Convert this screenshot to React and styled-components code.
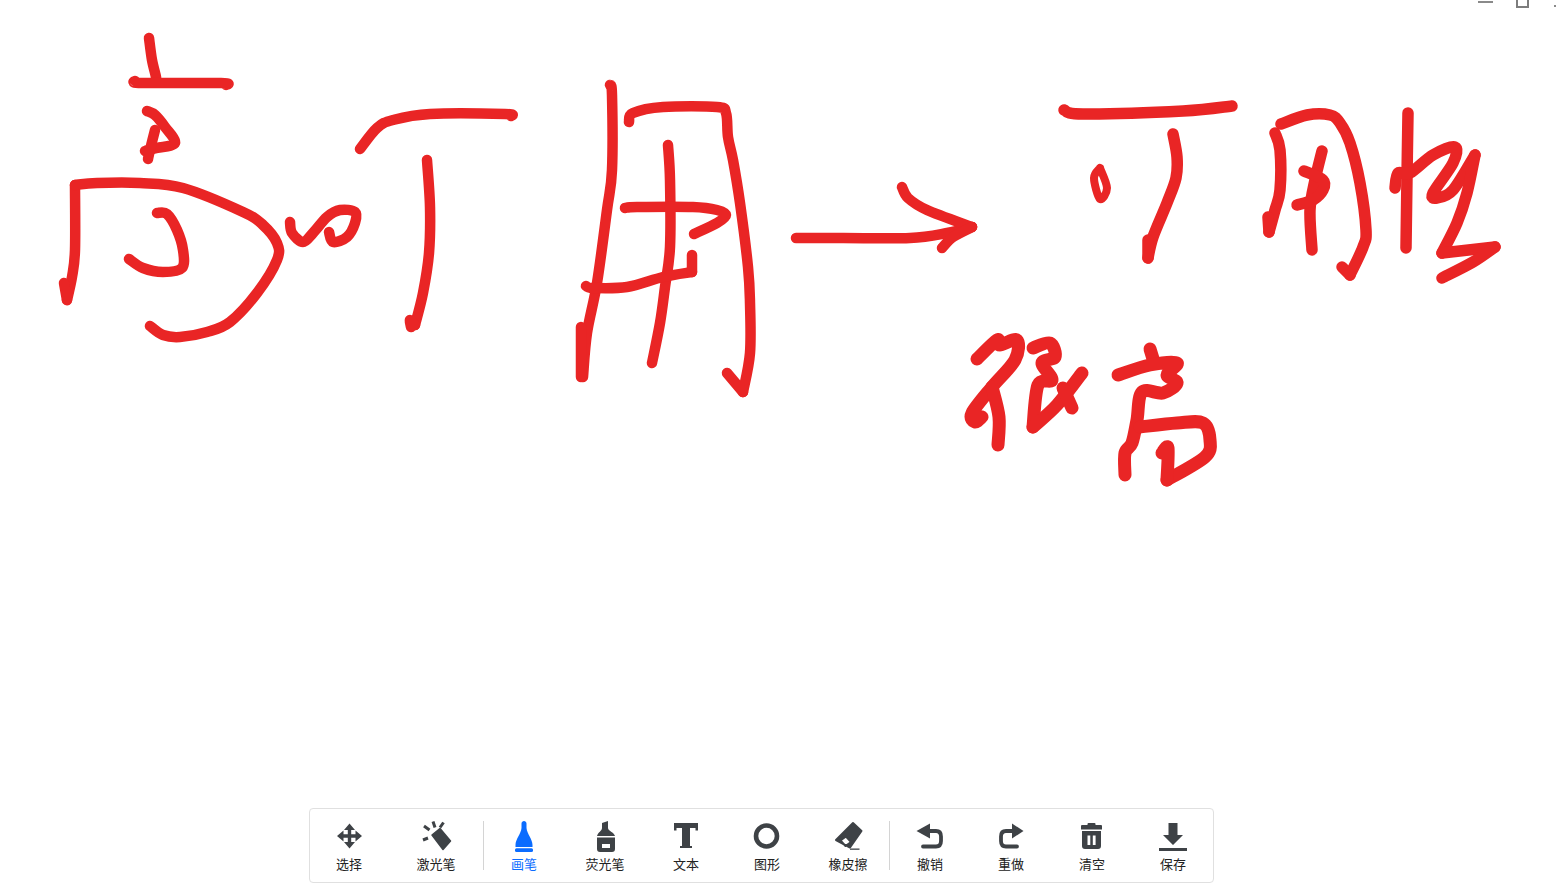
import styled, { createGlobalStyle } from "styled-components";

const GlobalStyle = createGlobalStyle`
  html, body {
    margin: 0;
    padding: 0;
    background: #fff;
  }
`;

const Page = styled.div`
  position: relative;
  width: 100%;
  height: 100vh;
  overflow: hidden;
  background: #fff;
`;

const Canvas = styled.svg`
  position: absolute;
  inset: 0;
  width: 100%;
  height: 100%;
`;

const WindowControls = styled.div`
  position: absolute;
  top: 0;
  left: 1478px;
  display: flex;
  align-items: flex-start;
`;

const Minimize = styled.div`
  width: 15px;
  height: 2px;
  margin: 1px 23px 0 0;
  background: #8a8a8a;
`;

const Maximize = styled.div`
  box-sizing: border-box;
  width: 13px;
  height: 8px;
  margin-right: 25px;
  border: 2px solid #7d7d7d;
  border-top: none;
`;

const CloseEdge = styled.div`
  width: 2px;
  height: 2px;
  margin-top: 5px;
  background: #8a8a8a;
`;

const Toolbar = styled.div`
  position: absolute;
  left: 309px;
  bottom: 8px;
  box-sizing: border-box;
  display: flex;
  width: 905px;
  height: 75px;
  background: #fff;
  border: 1px solid #e0e0e0;
  border-radius: 4px;
`;

const Group = styled.div`
  display: flex;
  gap: ${(props) => props.$gap || 0}px;
  margin-left: ${(props) => props.$shift || 0}px;
  padding-right: ${(props) => props.$pad || 0}px;
`;

const Tool = styled.div`
  display: flex;
  flex-direction: column;
  align-items: center;
  box-sizing: border-box;
  width: ${(props) => props.$width || 81}px;
  padding-top: 11px;
  color: ${(props) => (props.$active ? "#0b6cff" : "#3e4246")};
`;

const Icon = styled.svg`
  display: block;
  width: 32px;
  height: 32px;
  fill: currentColor;
`;

const Label = styled.span`
  margin-top: 3px;
  font-family: "Noto Sans CJK SC", "Noto Sans", sans-serif;
  font-size: 13px;
  line-height: 18px;
  white-space: nowrap;
  color: ${(props) => (props.$active ? "#0b6cff" : "#222")};
`;

const Divider = styled.div`
  flex: none;
  align-self: center;
  width: 1px;
  height: 49px;
  background: #d4d4d4;
`;

const SelectIcon = () => (
  <Icon viewBox="0 0 32 32">
    <path d="M16.5 3.500L22 10H18.200V14.300H22.500V10.500L29 16L22.500 21.500V17.700H18.200V22H22L16.5 28.500L11 22H14.800V17.700H10.500V21.500L4 16L10.500 10.500V14.300H14.800V10H11Z" />
  </Icon>
);

const LaserIcon = () => (
  <Icon viewBox="0 0 32 32">
    <path d="M12 15L20 8.500L30.500 21L23 29.500Z" strokeLinejoin="round" stroke="currentColor" strokeWidth="1.5" />
    <path d="M13 1.500L15 7.500M4 6L9.500 10M3 20L8 18M23.500 2.500L20 7.500" stroke="currentColor" strokeWidth="3" fill="none" />
  </Icon>
);

const PenIcon = () => (
  <Icon viewBox="0 0 32 32">
    <path d="M13.500 3.500C13.500 0 18.500 0 18.500 3.500V8C19 14 24.500 19 24.500 25V27H7.500V25C7.500 19 13 14 13.500 8Z" />
    <rect x="7" y="28.300" width="18" height="3.700" rx="1.500" />
  </Icon>
);

const HighlighterIcon = () => (
  <Icon viewBox="0 0 32 32">
    <path d="M13 3L19 1V8C19 11 25 12 26 16H8C9 12 13 11 13 8Z" />
    <path
      fillRule="evenodd"
      d="M8 17.500H26V29C26 31 25 32 23 32H11C9 32 8 31 8 29ZM13 24V28H21V24Z"
    />
  </Icon>
);

const TextIcon = () => (
  <Icon viewBox="0 0 32 32">
    <path d="M4 3H28V10.500H25.500V8H20V26H22V28H10V26H12V8H6.500V10.500H4Z" />
  </Icon>
);

const ShapeIcon = () => (
  <Icon viewBox="0 0 32 32">
    <circle cx="15.500" cy="16" r="10.500" fill="none" stroke="currentColor" strokeWidth="4.600" />
  </Icon>
);

const EraserIcon = () => (
  <Icon viewBox="0 0 32 32">
    <path
      fillRule="evenodd"
      strokeLinejoin="round"
      stroke="currentColor"
      strokeWidth="2"
      d="M21 3L29.500 11L18 27.500L4 20ZM8.500 20.500L14 16.500L19 22L13.500 26Z"
    />
    <rect x="18" y="28.500" width="9.500" height="1.300" />
  </Icon>
);

const UndoIcon = () => (
  <Icon viewBox="0 0 32 32">
    <path d="M2.500 11L16 3.500V18.500Z" />
    <path d="M14 11H22Q27 11 27 16.500V21Q27 26.500 22 26.500H9" fill="none" stroke="currentColor" strokeWidth="3.800" strokeLinecap="round" />
  </Icon>
);

const RedoIcon = () => (
  <Icon viewBox="0 0 32 32">
    <path d="M28.500 11L17 3.500V18.500Z" />
    <path d="M19 11H11Q6 11 6 16.500V21Q6 26.500 11 26.500H22" fill="none" stroke="currentColor" strokeWidth="3.800" strokeLinecap="round" />
  </Icon>
);

const TrashIcon = () => (
  <Icon viewBox="0 0 32 32">
    <path d="M5 6Q5 5 6 5H11.500V4Q11.500 3 12.500 3H18.500Q19.500 3 19.500 4V5H25Q26 5 26 6V9.500H5Z" />
    <path
      fillRule="evenodd"
      d="M6 11H25V26Q25 29 22 29H9Q6 29 6 26ZM11.500 15.500V25H14.300V15.500ZM16.800 15.500V25H19.600V15.500Z"
    />
  </Icon>
);

const SaveIcon = () => (
  <Icon viewBox="0 0 32 32">
    <path d="M11.500 3H20.500V15H26L16 25L6 15H11.500Z" />
    <rect x="2" y="28" width="28" height="3" />
  </Icon>
);

const TOOLS_FIRST = [
  { id: "select", label: "选择", icon: SelectIcon, width: 78 },
  { id: "laser", label: "激光笔", icon: LaserIcon },
];

const TOOLS_DRAW = [
  { id: "pen", label: "画笔", icon: PenIcon, active: true },
  { id: "highlighter", label: "荧光笔", icon: HighlighterIcon },
  { id: "text", label: "文本", icon: TextIcon },
  { id: "shape", label: "图形", icon: ShapeIcon },
  { id: "eraser", label: "橡皮擦", icon: EraserIcon },
];

const TOOLS_LAST = [
  { id: "undo", label: "撤销", icon: UndoIcon },
  { id: "redo", label: "重做", icon: RedoIcon },
  { id: "clear", label: "清空", icon: TrashIcon },
  { id: "save", label: "保存", icon: SaveIcon },
];

// hand-drawn strokes in page coordinates, grouped by pen width
const INK = [
  {
    width: 10.5,
    strokes: [
      // 高
      [[149, 38], [152, 60], [156, 77], [156, 82]],
      [[135, 81], [142, 83], [221, 83], [226, 85]],
      [[147, 111], [155, 115], [165, 127], [175, 143], [157, 148], [145, 151]],
      [[148, 159], [150, 150], [155, 130]],
      [[75, 185], [75, 250], [72, 277], [67, 300]],
      [[67, 300], [64, 283]],
      [[75, 185], [97, 183], [140, 183], [183, 188], [243, 212], [263, 225], [277, 243], [277, 260], [257, 293], [230, 322], [207, 332], [180, 337], [163, 335], [150, 326]],
      [[157, 213], [167, 214], [177, 230], [183, 250], [182, 268], [163, 272], [143, 268], [129, 259]],
      [[290, 222], [292, 233], [303, 242], [313, 233], [327, 217], [340, 210], [355, 212], [355, 223], [347, 237], [333, 242], [329, 232]],
      // 可
      [[360, 149], [377, 128], [393, 120], [430, 114], [505, 114], [511, 116]],
      [[427, 160], [430, 207], [429, 253], [423, 293], [415, 325]],
      [[415, 325], [410, 320], [411, 327]],
      // 用
      [[610, 85], [612, 95], [612, 170], [607, 210], [597, 283], [587, 333], [583, 377]],
      [[581, 327], [581, 377]],
      [[629, 122], [633, 113], [663, 107], [717, 107], [726, 113], [728, 137], [733, 160], [740, 203], [748, 267], [750, 303], [750, 353], [743, 392]],
      [[743, 392], [727, 373]],
      [[668, 145], [670, 180], [670, 247], [665, 287], [660, 323], [652, 363]],
      [[625, 208], [637, 207], [693, 207], [717, 210], [726, 215], [717, 223], [694, 234]],
      [[586, 286], [593, 288], [627, 287], [663, 277], [692, 272]],
      [[692, 272], [692, 255]],
      // arrow
      [[796, 238], [843, 238], [910, 238], [947, 233], [972, 227]],
      [[902, 187], [908, 198], [927, 210], [972, 227]],
      [[972, 227], [953, 237], [942, 248]],
    ],
  },
  {
    width: 8,
    strokes: [
      // dot of 可, nearly closed ring
      [[1100, 168], [1094, 178], [1100, 199], [1107, 188], [1100, 168]],
    ],
  },
  {
    width: 11.5,
    strokes: [
      // 可用性
      [[1064, 110], [1083, 114], [1183, 111], [1232, 106]],
      [[1173, 134], [1177, 157], [1176, 178], [1167, 203], [1153, 237], [1148, 258]],
      [[1148, 258], [1148, 240]],
      [[1275, 133], [1280, 150], [1280, 190], [1275, 210], [1269, 232]],
      [[1269, 232], [1268, 217]],
      [[1281, 124], [1307, 115], [1330, 115], [1340, 123], [1350, 143], [1360, 183], [1366, 230], [1363, 247], [1350, 275]],
      [[1350, 275], [1342, 267]],
      [[1322, 151], [1315, 180], [1310, 210], [1312, 250]],
      [[1304, 171], [1323, 180], [1323, 190], [1313, 200], [1297, 205]],
      [[1408, 113], [1407, 177], [1406, 248]],
      [[1395, 188], [1398, 173], [1410, 173], [1433, 155], [1455, 147], [1453, 163], [1433, 193], [1437, 198], [1453, 190], [1475, 155]],
      [[1475, 155], [1467, 193], [1457, 223], [1442, 253]],
      [[1442, 253], [1495, 247]],
      [[1495, 247], [1473, 262], [1442, 278]],
    ],
  },
  {
    width: 13,
    strokes: [
      // 很
      [[977, 359], [997, 340], [1000, 345], [1017, 340], [1015, 360], [992, 387], [972, 413], [975, 422], [982, 417]],
      [[992, 387], [999, 417], [998, 445]],
      [[1033, 348], [1050, 343], [1055, 357], [1042, 363], [1052, 380], [1038, 385], [1033, 427]],
      [[1033, 427], [1057, 405], [1082, 373]],
      [[1063, 388], [1072, 408]],
      // 高
      [[1150, 349], [1154, 362]],
      [[1118, 375], [1150, 365], [1177, 363], [1167, 375], [1177, 383], [1163, 393], [1142, 392], [1137, 420], [1132, 443], [1125, 453], [1125, 475]],
      [[1140, 427], [1177, 423], [1203, 423], [1210, 440], [1205, 457], [1167, 480]],
      [[1167, 480], [1168, 448], [1162, 453]],
    ],
  },
];

function toPath(points) {
  let d = `M${points[0][0]} ${points[0][1]}`;
  for (let i = 0; i < points.length - 1; i++) {
    const p0 = points[i - 1] || points[i];
    const p1 = points[i];
    const p2 = points[i + 1];
    const p3 = points[i + 2] || p2;
    const c1x = p1[0] + (p2[0] - p0[0]) / 6;
    const c1y = p1[1] + (p2[1] - p0[1]) / 6;
    const c2x = p2[0] - (p3[0] - p1[0]) / 6;
    const c2y = p2[1] - (p3[1] - p1[1]) / 6;
    d += `C${c1x} ${c1y} ${c2x} ${c2y} ${p2[0]} ${p2[1]}`;
  }
  return d;
}

function ToolButton({ tool }) {
  const Glyph = tool.icon;
  return (
    <Tool $width={tool.width} $active={tool.active}>
      <Glyph />
      <Label $active={tool.active}>{tool.label}</Label>
    </Tool>
  );
}

export default function App() {
  return (
    <Page>
      <GlobalStyle />
      <Canvas viewBox="0 0 1556 891">
        {INK.map((pen) =>
          pen.strokes.map((points, index) => (
            <path
              key={`${pen.width}-${index}`}
              d={toPath(points)}
              fill="none"
              stroke="#e92525"
              strokeWidth={pen.width}
              strokeLinecap="round"
              strokeLinejoin="round"
            />
          ))
        )}
      </Canvas>
      <WindowControls>
        <Minimize />
        <Maximize />
        <CloseEdge />
      </WindowControls>
      <Toolbar>
        <Group $gap={7.5} $pad={6.5}>
          {TOOLS_FIRST.map((tool) => (
            <ToolButton key={tool.id} tool={tool} />
          ))}
        </Group>
        <Divider />
        <Group $shift={-0.5}>
          {TOOLS_DRAW.map((tool) => (
            <ToolButton key={tool.id} tool={tool} />
          ))}
        </Group>
        <Divider />
        <Group>
          {TOOLS_LAST.map((tool) => (
            <ToolButton key={tool.id} tool={tool} />
          ))}
        </Group>
      </Toolbar>
    </Page>
  );
}
